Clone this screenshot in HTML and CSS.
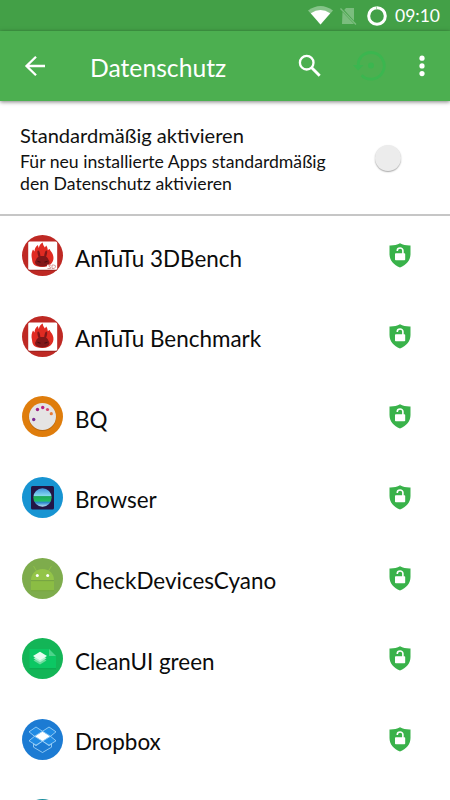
FILE: index.html
```html
<!DOCTYPE html>
<html lang="de">
<head>
<meta charset="utf-8">
<title>Datenschutz</title>
<link rel="stylesheet" href="styles.css">
</head>
<body>
<svg class="defs" aria-hidden="true">
  <defs>
    <linearGradient id="globe" x1="0" y1="0" x2="0" y2="1">
      <stop offset="0" stop-color="#3f93dc"/><stop offset=".4" stop-color="#86d9ee"/>
      <stop offset=".45" stop-color="#1fa85b"/><stop offset=".68" stop-color="#20bd62"/>
      <stop offset=".78" stop-color="#2f86d0"/><stop offset="1" stop-color="#b7e4f0"/>
    </linearGradient>
    <symbol id="shield" viewBox="0 0 22 25">
      <path fill="#39b24a" d="M11 .3C8 2.200 4.300 2.600.5 2.500V11c0 6.500 4.300 11 10.500 13.500C17.200 22 21.500 17.500 21.500 11V2.500C17.700 2.600 14 2.200 11 .3z"/>
      <path fill="none" stroke="#fff" stroke-width="1.600" d="M8.300 8V7.500a2.800 2.500 0 0 1 5.600 0V11"/>
      <rect x="6" y="10.300" width="10.200" height="6.900" rx=".8" fill="#fff"/>
    </symbol>
    <symbol id="antutu" viewBox="0 0 41 41">
      <circle cx="20.500" cy="20.500" r="20.500" fill="#be2924"/>
      <rect x="6.200" y="7.200" width="29" height="28.500" rx="1.500" fill="#9f211c"/>
      <rect x="6.200" y="6.500" width="29" height="28.300" rx="1.500" fill="#fff"/>
      <path fill="#e02b22" d="M10 24C9 20 9.700 17 11 14.500l1.500 2c0-3 1.300-5 3.300-6.500l1 3c.5-2.500 1.500-4.500 4-5.500 0 2 1 3.500 2 5l1.500-2c1 1.500 1.300 3 1.500 4.500l2-1c0 2 2.300 3 3 5.500C33 25 30 32 20.500 32S10.500 28 10 24z"/>
      <path fill="#811719" d="M14 25c.5-1.800 1.500-2.800 2.500-3.300-1.200-3-1.500-6.200-.4-6.300 1.400 0 2.100 3 2.300 5.700h3.800c.3-2.700 1-5.700 2.300-5.700 1.200.2.800 3.500-.4 6.300 1.200.5 2 1.600 2.500 3.300 2.700 3-.7 6.500-6.300 6.500s-9-3.500-6.300-6.500z"/>
      <path fill="none" stroke="#4c0d11" stroke-width="1.100" d="M15.500 26.200l3 1M25.500 26.200l-3 1"/>
    </symbol>
  </defs>
</svg>

<div class="statusbar">
  <svg class="wifi" viewBox="0 0 25 19"><path fill="#86c489" d="M0 4.500Q12.500-4.500 25 4.500L12.500 18.500z"/><path fill="#fff" d="M2.800 7.300Q12.500.8 22.200 7.300L12.500 18.500z"/></svg>
  <svg class="sim" viewBox="0 0 17 18"><path fill="#7bbd7e" d="M6 1h8v12.800L4.200 3zM2.500 5L14 17H2z"/><path stroke="#7bbd7e" stroke-width="1.300" d="M.5 1.500l15.500 16"/></svg>
  <svg class="battery" viewBox="0 0 20 20"><circle cx="10" cy="10" r="8.300" fill="none" stroke="#fff" stroke-width="3"/><path stroke="#9bd09d" stroke-width=".8" d="M9.500 0v3"/></svg>
  <span class="clock">09:10</span>
</div>

<header class="appbar">
  <svg class="back" viewBox="0 0 22 22"><path fill="none" stroke="#fff" stroke-width="2.300" d="M21 11H3M12 1.700L2.500 11l9.500 9.300"/></svg>
  <h1 class="title">Datenschutz</h1>
  <svg class="search" viewBox="0 0 24 24"><circle cx="8.700" cy="8.700" r="6.800" fill="none" stroke="#fff" stroke-width="2.300"/><path stroke="#fff" stroke-width="2.900" d="M13.500 13.500l8.200 8.200"/></svg>
  <svg class="reset" viewBox="0 0 34 32"><path fill="none" stroke="#3bb64f" stroke-width="2.800" d="M5.500 17C4 9 10 2.500 18 2.500a13.300 13.300 0 1 1-9.500 22.700"/><path fill="#3bb64f" d="M0 15h10.500L5.200 20.500z"/><circle cx="18" cy="15.500" r="3" fill="#3bb64f"/></svg>
  <svg class="more" viewBox="0 0 6 22"><circle cx="3" cy="3.200" r="2.600"/><circle cx="3" cy="10.900" r="2.600"/><circle cx="3" cy="18.600" r="2.600"/></svg>
</header>

<section class="setting">
  <div class="setting-text">
    <h2>Standardmäßig aktivieren</h2>
    <p>Für neu installierte Apps standardmäßig<br>den Datenschutz aktivieren</p>
  </div>
  <span class="switch"></span>
</section>

<ul class="apps">
  <li>
    <svg class="icon" viewBox="0 0 41 41"><use href="#antutu"/><path fill="none" stroke="#fff" stroke-width="4" d="M25 31.800h9.500"/><path fill="none" stroke="#cf827f" stroke-width=".8" d="M25.500 30h3l-1.500 1.500q2 .2 1.500 2h-3M30 30h1.500q2.500 0 2 2t-3.500 1.500z"/></svg>
    <span class="name">AnTuTu 3DBench</span><svg class="shield"><use href="#shield"/></svg>
  </li>
  <li>
    <svg class="icon" viewBox="0 0 41 41"><use href="#antutu"/></svg>
    <span class="name">AnTuTu Benchmark</span><svg class="shield"><use href="#shield"/></svg>
  </li>
  <li>
    <svg class="icon" viewBox="0 0 41 41"><circle cx="20.500" cy="20.500" r="20.500" fill="#df7d0c"/><circle cx="20.500" cy="21.200" r="13.700" fill="#b9680f"/><circle cx="20.500" cy="20.500" r="13.500" fill="#e5e4e4"/><circle cx="11.700" cy="23.500" r="1.700" fill="#7d2a91"/><circle cx="15.500" cy="13.500" r="1.700" fill="#a12286"/><circle cx="20.700" cy="11.500" r="1.700" fill="#ba2083"/><circle cx="25.500" cy="13.500" r="1.600" fill="#d94370"/><circle cx="29.300" cy="17.700" r="1.600" fill="#e77c3b"/></svg>
    <span class="name">BQ</span><svg class="shield"><use href="#shield"/></svg>
  </li>
  <li>
    <svg class="icon" viewBox="0 0 41 41"><circle cx="20.500" cy="20.500" r="20.500" fill="#1794d2"/><rect x="9" y="9" width="23" height="23.500" rx="1.500" fill="#231545"/><circle cx="20.500" cy="20.500" r="9.200" fill="url(#globe)"/></svg>
    <span class="name">Browser</span><svg class="shield"><use href="#shield"/></svg>
  </li>
  <li>
    <svg class="icon" viewBox="0 0 41 41"><circle cx="20.500" cy="20.500" r="20.500" fill="#7eac4c"/><path fill="#93c448" d="M9 22c0-6 4.500-11 11.500-11S32 16 32 22z"/><path stroke="#93c448" stroke-width=".8" d="M14.500 13l-3-5M26.500 13l3-5"/><path fill="#8bbd44" d="M9 23h23v9.500H9z"/><path stroke="#729f3b" stroke-width=".6" d="M9 22.700h23M9 32.700h23"/><circle cx="15.300" cy="17.500" r="1.500" fill="#fff"/><circle cx="25.700" cy="17.500" r="1.500" fill="#fff"/></svg>
    <span class="name">CheckDevicesCyano</span><svg class="shield"><use href="#shield"/></svg>
  </li>
  <li>
    <svg class="icon" viewBox="0 0 41 41"><circle cx="20.500" cy="20.500" r="20.500" fill="#13b557"/><path fill="#0cc763" d="M7.500 11H27l7 7v12.500H7.500z"/><path fill="#4dd38b" d="M27 11l7 7h-7z"/><path fill="none" stroke="#0a9e4a" stroke-width=".7" d="M7.500 30.700H34"/><path fill="#6bdb9d" d="M11.500 22.500l6.500-4 6.500 4-6.500 4z"/><path fill="#b4efcf" d="M11.500 20.300l6.500-4 6.500 4-6.500 4z"/><path fill="#e8fcf1" d="M11 18l7-4.200 7 4.200-7 4.200z"/></svg>
    <span class="name">CleanUI green</span><svg class="shield"><use href="#shield"/></svg>
  </li>
  <li>
    <svg class="icon" viewBox="0 0 41 41"><circle cx="20.500" cy="20.500" r="20.500" fill="#1c7bd3"/><path fill="#fff" d="M20.500 12.500l7.500 4.800-7.500 4.900-7.500-4.900z"/><g fill="#208be4" stroke="#a9d9fa" stroke-width=".8"><path d="M14 8l6.500 4.300-8 5-5.500-4.500zM27 8l-6.500 4.300 8 5 5.500-4.500zM12.500 17.300L7 21.800l7 4.400 6.500-4zM28.500 17.300l5.500 4.500-7 4.400-6.500-4z"/><path fill="#1c7bd3" d="M11.500 25v3.200l9 5.300 9-5.300V25L27 26.700l-6.500-4.500-6.500 4.500z"/></g></svg>
    <span class="name">Dropbox</span><svg class="shield"><use href="#shield"/></svg>
  </li>
  <li>
    <svg class="icon" viewBox="0 0 41 41"><circle cx="20.500" cy="20.500" r="20.500" fill="#188c9c"/></svg>
  </li>
</ul>
</body>
</html>
```
FILE: styles.css
```css
* { box-sizing: border-box; margin: 0; padding: 0; }
html, body { height: 100%; overflow: hidden; }
body {
  display: flex;
  flex-direction: column;
  background: #fff;
  color: #111;
  font-family: Lato, "Liberation Sans", sans-serif;
}
svg { display: block; flex: none; }
.defs { width: 0; height: 0; position: absolute; }

.statusbar {
  flex: none;
  display: flex;
  align-items: center;
  justify-content: flex-end;
  height: 31px;
  padding-right: 10px;
  background: #43a047;
  color: #fff;
}
.wifi { width: 25px; height: 19px; margin-right: 7px; }
.sim { width: 17px; height: 18px; margin: 0 10px 0 0; }
.battery { width: 20px; height: 20px; margin-right: 8px; }
.clock { width: 45px; font-size: 17.500px; line-height: 20px; white-space: nowrap; }

.appbar {
  flex: none;
  display: flex;
  align-items: center;
  height: 70px;
  padding: 0 24px;
  background: #4caf50;
  box-shadow: 0 1px 4px rgba(0, 0, 0, .5);
  color: #fff;
}
.back { width: 22px; height: 22px; }
.title { width: 208px; margin-left: 44px; font-size: 24.700px; font-weight: 400; line-height: 32px; padding-top: 3px; }
.search { width: 24px; height: 24px; }
.reset { width: 34px; height: 32px; margin-left: 31px; }
.more { width: 6px; height: 22px; margin-left: 32px; fill: #fff; }

.setting {
  flex: none;
  display: flex;
  justify-content: space-between;
  height: 115px;
  padding: 22px 49px 0 20px;
  border-bottom: 2px solid #c6c6c6;
}
.setting h2 { font-size: 20.100px; font-weight: 400; line-height: 24px; white-space: nowrap; }
.setting p { margin-top: 4px; font-size: 17.650px; line-height: 21.500px; white-space: nowrap; }
.switch {
  width: 26px;
  height: 26px;
  margin-top: 22px;
  border-radius: 50%;
  background: #ececec;
  box-shadow: 0 1px 1.500px rgba(0, 0, 0, .35);
}

.apps { list-style: none; flex: none; margin-top: -.7px; }
.apps li { display: flex; align-items: center; height: 80.620px; padding: 0 39px 0 22px; }
.icon { width: 41px; height: 41px; }
.name { flex: 1; margin-left: 12px; padding-top: 6px; font-size: 22.450px; line-height: 28px; color: #0b0b0b; white-space: nowrap; }
.shield { width: 22px; height: 25px; }
```
